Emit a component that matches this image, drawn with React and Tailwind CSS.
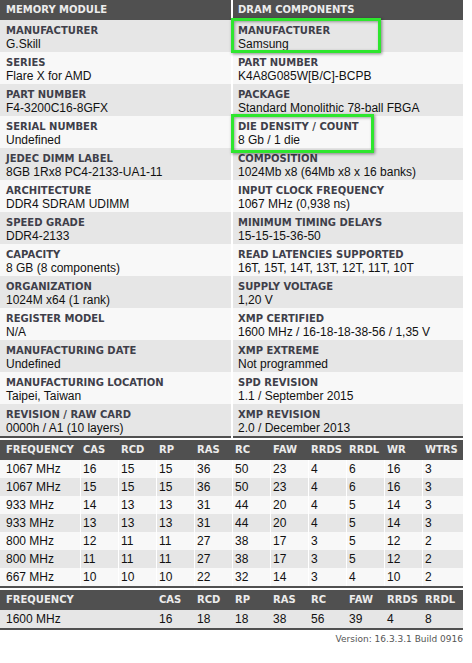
const LEFT = [
  ["MANUFACTURER", "G.Skill"],
  ["SERIES", "Flare X for AMD"],
  ["PART NUMBER", "F4-3200C16-8GFX"],
  ["SERIAL NUMBER", "Undefined"],
  ["JEDEC DIMM LABEL", "8GB 1Rx8 PC4-2133-UA1-11"],
  ["ARCHITECTURE", "DDR4 SDRAM UDIMM"],
  ["SPEED GRADE", "DDR4-2133"],
  ["CAPACITY", "8 GB (8 components)"],
  ["ORGANIZATION", "1024M x64 (1 rank)"],
  ["REGISTER MODEL", "N/A"],
  ["MANUFACTURING DATE", "Undefined"],
  ["MANUFACTURING LOCATION", "Taipei, Taiwan"],
  ["REVISION / RAW CARD", "0000h / A1 (10 layers)"],
];

const RIGHT = [
  ["MANUFACTURER", "Samsung"],
  ["PART NUMBER", "K4A8G085W[B/C]-BCPB"],
  ["PACKAGE", "Standard Monolithic 78-ball FBGA"],
  ["DIE DENSITY / COUNT", "8 Gb / 1 die"],
  ["COMPOSITION", "1024Mb x8 (64Mb x8 x 16 banks)"],
  ["INPUT CLOCK FREQUENCY", "1067 MHz (0,938 ns)"],
  ["MINIMUM TIMING DELAYS", "15-15-15-36-50"],
  ["READ LATENCIES SUPPORTED", "16T, 15T, 14T, 13T, 12T, 11T, 10T"],
  ["SUPPLY VOLTAGE", "1,20 V"],
  ["XMP CERTIFIED", "1600 MHz / 16-18-18-38-56 / 1,35 V"],
  ["XMP EXTREME", "Not programmed"],
  ["SPD REVISION", "1.1 / September 2015"],
  ["XMP REVISION", "2.0 / December 2013"],
];

const TIMING_HEAD = ["FREQUENCY", "CAS", "RCD", "RP", "RAS", "RC", "FAW", "RRDS", "RRDL", "WR", "WTRS"];
const TIMINGS = [
  ["1067 MHz", 16, 15, 15, 36, 50, 23, 4, 6, 16, 3],
  ["1067 MHz", 15, 15, 15, 36, 50, 23, 4, 6, 16, 3],
  ["933 MHz", 14, 13, 13, 31, 44, 20, 4, 5, 14, 3],
  ["933 MHz", 13, 13, 13, 31, 44, 20, 4, 5, 14, 3],
  ["800 MHz", 12, 11, 11, 27, 38, 17, 3, 5, 12, 2],
  ["800 MHz", 11, 11, 11, 27, 38, 17, 3, 5, 12, 2],
  ["667 MHz", 10, 10, 10, 22, 32, 14, 3, 4, 10, 2],
];

const XMP_HEAD = ["FREQUENCY", "CAS", "RCD", "RP", "RAS", "RC", "FAW", "RRDS", "RRDL"];
const XMP = ["1600 MHz", 16, 18, 18, 38, 56, 39, 4, 8];

const label = "font-['DejaVu_Sans',sans-serif] text-[10px] font-bold leading-[12px] whitespace-nowrap";
const value = "font-['Liberation_Sans',Arial,sans-serif] text-[12px] leading-[14px] text-[#111] whitespace-nowrap";

function InfoColumn({ title, rows, padLeft }) {
  return (
    <div className="flex flex-col border-b-2 border-[#505050]">
      <div className={`flex h-5 items-center bg-[#505050] ${padLeft} ${label} text-[#ececec]`}>{title}</div>
      {rows.map(([k, v], i) => (
        <div key={k} className={`flex h-8 flex-col pt-[5px] ${padLeft} ${i % 2 === 0 ? "bg-[#e6e6e6]" : "bg-[#f8f8f8]"}`}>
          <span className={`${label} text-[#3f3f4a]`}>{k}</span>
          <span className={value}>{v}</span>
        </div>
      ))}
    </div>
  );
}

function Highlight({ className }) {
  return (
    <div
      className={`pointer-events-none absolute border-[3px] border-[#2ee62e] shadow-[1px_1px_3px_rgba(0,0,0,0.45),inset_1px_1px_3px_rgba(0,0,0,0.35)] ${className}`}
    />
  );
}

export default function App() {
  return (
    <div className="min-h-[663px] w-[472px] bg-white">
      <div className="relative w-[463px]">
        <div className="grid grid-cols-[231px_230px] gap-x-[2px]">
          <InfoColumn title="MEMORY MODULE" rows={LEFT} padLeft="pl-[6px]" />
          <InfoColumn title="DRAM COMPONENTS" rows={RIGHT} padLeft="pl-[5px]" />
        </div>

        <Highlight className="left-[231px] top-[18px] h-[35px] w-[150px]" />
        <Highlight className="left-[231px] top-[114px] h-[39px] w-[143px]" />

        <div className="mt-[2px] border-b-2 border-[#505050]">
          <div className="grid h-5 grid-cols-[80px_repeat(9,38px)_1fr] items-center bg-[#505050] text-[#ececec]">
            {TIMING_HEAD.map((h, i) => (
              <span key={h} className={`${label} ${i === 0 ? "pl-[6px]" : "pl-[3px]"}`}>{h}</span>
            ))}
          </div>
          {TIMINGS.map((r, ri) => (
            <div
              key={ri}
              className={`grid h-[18px] grid-cols-[80px_repeat(9,38px)_1fr] ${ri % 2 === 0 ? "bg-[#f8f8f8]" : "bg-[#e6e6e6]"}`}
            >
              {r.map((c, ci) => (
                <span
                  key={ci}
                  className={`${value} flex items-center ${ci === 0 ? "pl-[6px]" : "border-l border-white pl-[2px]"}`}
                >
                  {c}
                </span>
              ))}
            </div>
          ))}
        </div>

        <div className="mt-[2px] border-b-2 border-[#505050]">
          <div className="grid h-5 grid-cols-[156px_repeat(7,38px)_1fr] items-center bg-[#505050] text-[#ececec]">
            {XMP_HEAD.map((h, i) => (
              <span key={h} className={`${label} ${i === 0 ? "pl-[6px]" : "pl-[3px]"}`}>{h}</span>
            ))}
          </div>
          <div className="grid h-[18px] grid-cols-[156px_repeat(7,38px)_1fr] bg-[#e6e6e6]">
            {XMP.map((c, ci) => (
              <span key={ci} className={`${value} flex items-center ${ci === 0 ? "pl-[6px]" : "pl-[3px]"}`}>{c}</span>
            ))}
          </div>
        </div>

        <div className="flex justify-end pt-[3px] font-['DejaVu_Sans',sans-serif] text-[9px] leading-[12px] text-[#555]">
          Version: 16.3.3.1 Build 0916
        </div>
      </div>
    </div>
  );
}
